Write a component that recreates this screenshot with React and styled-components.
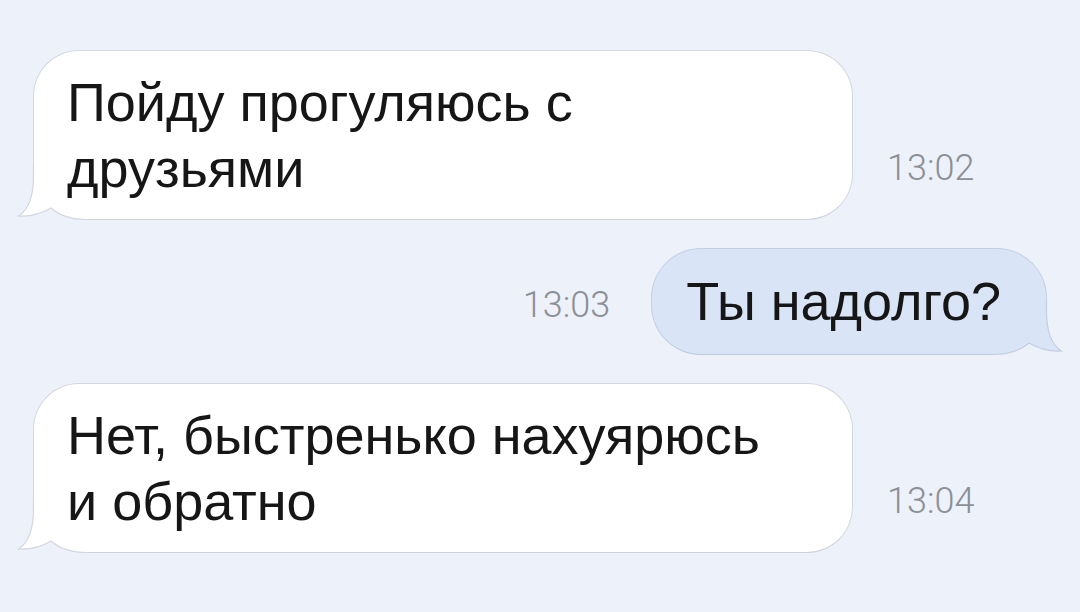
import React from "react";
import styled, { createGlobalStyle } from "styled-components";

const BG = "#edf1fa";

const Global = createGlobalStyle`
  html, body { margin: 0; padding: 0; background: ${BG}; }
  body { font-family: "Liberation Sans", Arial, sans-serif; }
`;

const Page = styled.div`
  width: 1080px;
  height: 612px;
  box-sizing: border-box;
  padding: 50px 33px 0 33px;
  display: flex;
  flex-direction: column;
  gap: 28px;
  background: ${BG};
  overflow: hidden;
`;

const Row = styled.div`
  display: flex;
  align-items: ${(p) => (p.$out ? "center" : "flex-end")};
  justify-content: ${(p) => (p.$out ? "flex-end" : "flex-start")};
  gap: ${(p) => (p.$out ? "41px" : "34px")};
`;

const Bubble = styled.div`
  position: relative;
  box-sizing: border-box;
  width: ${(p) => (p.$out ? "auto" : "820px")};
  padding: ${(p) => (p.$out ? "19px 45px 20px 34px" : "18px 33px 18px 33px")};
  background: ${(p) => (p.$out ? "#d9e5f7" : "#ffffff")};
  border: 1px solid ${(p) => (p.$out ? "#c3d0e2" : "#d3d7de")};
  border-bottom-color: ${(p) => (p.$out ? "#bccadd" : "#cdd1d8")};
  border-radius: ${(p) => (p.$out ? "50px 50px 0 50px" : "46px 46px 46px 0")};
  color: #161616;
  font-family: "Liberation Sans", Arial, sans-serif;
  font-size: 54px;
  line-height: 66px;
`;

const Line = styled.div`
  position: relative;
  z-index: 1;
  white-space: nowrap;
`;

const Time = styled.span`
  font-family: Roboto, "Liberation Sans", sans-serif;
  font-weight: 300;
  font-size: 36px;
  color: #8b8f96;
  margin: ${(p) => (p.$out ? "6px 0 0 0" : "0 0 31px 0")};
  white-space: nowrap;
`;

const TailSvg = styled.svg`
  position: absolute;
  bottom: -1px;
  width: 70px;
  height: 56px;
  overflow: visible;
  z-index: 0;
  ${(p) => (p.$out ? "right: -17px; transform: scaleX(-1);" : "left: -17px;")}
`;

const EDGE = "M16.5 0 L16.5 12 C16.5 34 11 46 1.5 52 C12 52.5 24 50 34 44 C42 51 52 55.5 70 55.5";

function Tail({ out }) {
  const fill = out ? "#d9e5f7" : "#ffffff";
  const stroke = out ? "#c3d0e2" : "#d3d7de";
  return (
    <TailSvg $out={out} viewBox="0 0 70 56">
      <path
        d="M0 57 L1.5 52 C12 52.5 24 50 34 44 C42 51 52 55.5 70 55.5 L70 58 L0 58 Z"
        fill={BG}
      />
      <path d={EDGE + " L70 0 Z"} fill={fill} />
      <path d={EDGE} fill="none" stroke={stroke} strokeWidth="1.2" />
    </TailSvg>
  );
}

const messages = [
  { out: false, lines: ["Пойду прогуляюсь с", "друзьями"], time: "13:02" },
  { out: true, lines: ["Ты надолго?"], time: "13:03" },
  { out: false, lines: ["Нет, быстренько нахуярюсь", "и обратно"], time: "13:04" },
];

export default function App() {
  return (
    <>
      <Global />
      <Page>
        {messages.map((m, i) => (
          <Row key={i} $out={m.out}>
            {m.out && <Time $out>{m.time}</Time>}
            <Bubble $out={m.out}>
              {m.lines.map((l, j) => (
                <Line key={j}>{l}</Line>
              ))}
              <Tail out={m.out} />
            </Bubble>
            {!m.out && <Time>{m.time}</Time>}
          </Row>
        ))}
      </Page>
    </>
  );
}
